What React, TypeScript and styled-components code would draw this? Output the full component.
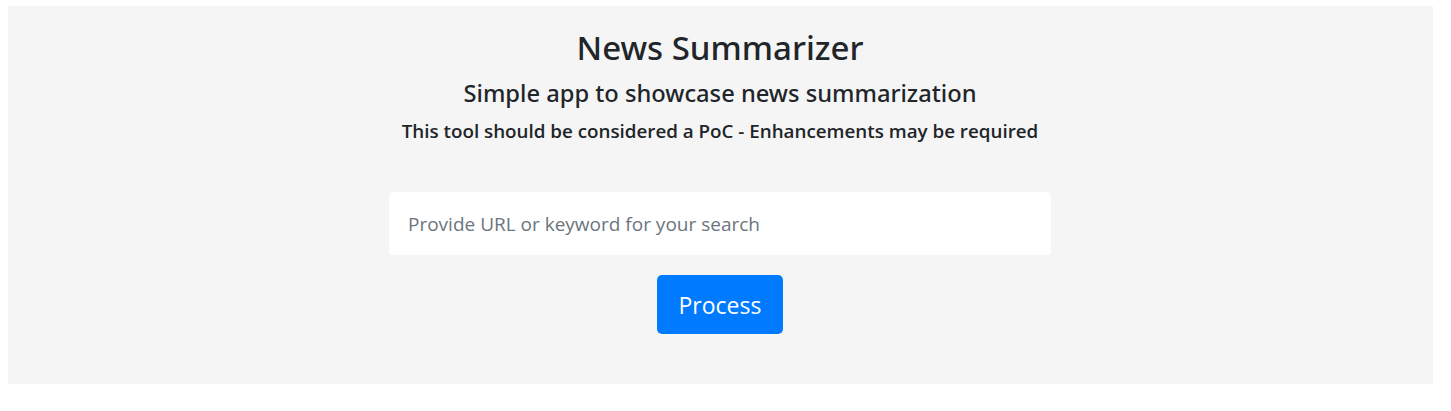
import React from "react";
import styled, { createGlobalStyle } from "styled-components";

const Global = createGlobalStyle`
  html, body { margin: 0; padding: 0; background: #ffffff; }
  body { font-family: "Open Sans", "Noto Sans", sans-serif; color: #212529; }
  * { box-sizing: border-box; }
`;

const Page = styled.div`
  padding: 6px 18px 0 8px;
`;

const Jumbo = styled.div`
  background: #f5f5f5;
  height: 378px;
  display: flex;
  flex-direction: column;
  align-items: center;
  padding: 20px 1px 0 0;
`;

const Title = styled.h1`
  margin: 0;
  font-family: "Noto Sans", "Open Sans", sans-serif;
  font-size: 33px;
  font-weight: 500;
  line-height: 44px;
`;

const Subtitle = styled.h4`
  margin: 8px 0 0;
  font-family: "Noto Sans", "Open Sans", sans-serif;
  font-size: 23.7px;
  font-weight: 500;
  line-height: 30px;
`;

const Note = styled.h6`
  margin: 11px 0 0;
  font-size: 18.8px;
  font-weight: 600;
  line-height: 24px;
`;

const Form = styled.form`
  margin-top: 49px;
  display: flex;
  flex-direction: column;
  align-items: center;
  gap: 20px;
`;

const Input = styled.input`
  width: 662px;
  height: 63px;
  border: none;
  border-radius: 4px;
  background: #ffffff;
  padding: 0 19px;
  font-family: inherit;
  font-size: 19px;
  color: #495057;
  outline: none;
  &::placeholder { color: #6c757d; }
`;

const Button = styled.button`
  width: 126px;
  height: 59px;
  border: none;
  border-radius: 5px;
  background: #007bff;
  color: #ffffff;
  font-family: inherit;
  font-size: 23px;
  cursor: pointer;
`;

export default function App() {
  return (
    <Page>
      <Global />
      <Jumbo>
        <Title>News Summarizer</Title>
        <Subtitle>Simple app to showcase news summarization</Subtitle>
        <Note>This tool should be considered a PoC - Enhancements may be required</Note>
        <Form onSubmit={(e) => e.preventDefault()}>
          <Input placeholder="Provide URL or keyword for your search" />
          <Button type="submit">Process</Button>
        </Form>
      </Jumbo>
    </Page>
  );
}
